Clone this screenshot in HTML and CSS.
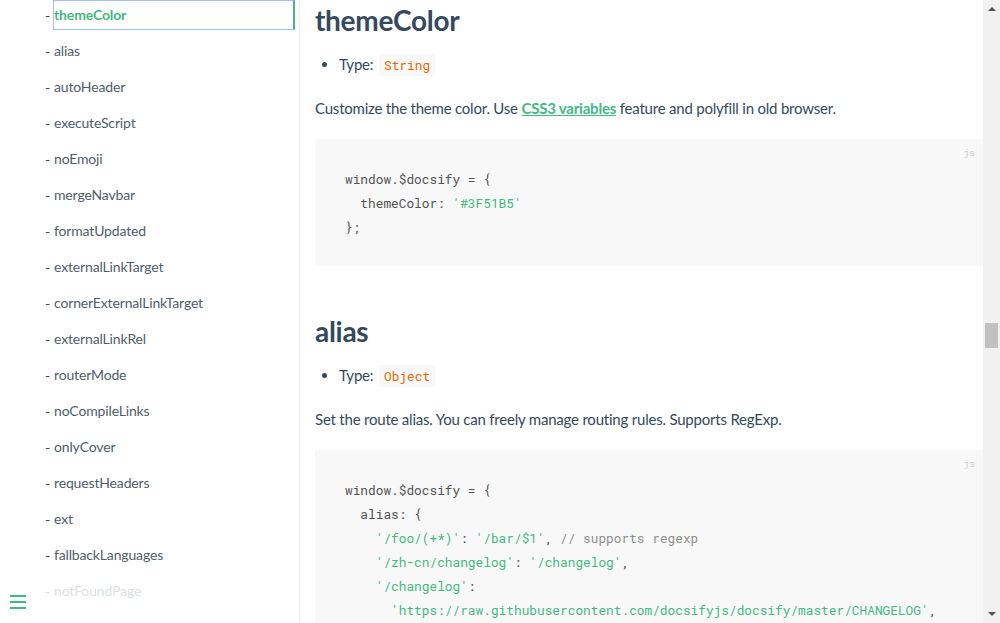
FILE: index.html
```html
<!DOCTYPE html>
<html>
<head>
<meta charset="utf-8">
<link rel="stylesheet" href="styles.css">
</head>
<body>
<div class="app">
  <aside class="sidebar">
    <ul class="nav">
      <li class="item"><span class="dash">-</span><a class="link active">themeColor</a></li>
      <li class="item"><span class="dash">-</span><a class="link">alias</a></li>
      <li class="item"><span class="dash">-</span><a class="link">autoHeader</a></li>
      <li class="item"><span class="dash">-</span><a class="link">executeScript</a></li>
      <li class="item"><span class="dash">-</span><a class="link">noEmoji</a></li>
      <li class="item"><span class="dash">-</span><a class="link">mergeNavbar</a></li>
      <li class="item"><span class="dash">-</span><a class="link">formatUpdated</a></li>
      <li class="item"><span class="dash">-</span><a class="link">externalLinkTarget</a></li>
      <li class="item"><span class="dash">-</span><a class="link">cornerExternalLinkTarget</a></li>
      <li class="item"><span class="dash">-</span><a class="link">externalLinkRel</a></li>
      <li class="item"><span class="dash">-</span><a class="link">routerMode</a></li>
      <li class="item"><span class="dash">-</span><a class="link">noCompileLinks</a></li>
      <li class="item"><span class="dash">-</span><a class="link">onlyCover</a></li>
      <li class="item"><span class="dash">-</span><a class="link">requestHeaders</a></li>
      <li class="item"><span class="dash">-</span><a class="link">ext</a></li>
      <li class="item"><span class="dash">-</span><a class="link">fallbackLanguages</a></li>
      <li class="item"><span class="dash">-</span><a class="link">notFoundPage</a></li>
    </ul>
    <button class="toggle" aria-label="toggle sidebar"><span></span><span></span><span></span></button>
  </aside>
  <main class="content">
    <section class="section">
      <h2 class="title">themeColor</h2>
      <ul class="props"><li>Type: <code class="inline">String</code></li></ul>
      <p class="para">Customize the theme color. Use <a class="plink">CSS3 variables</a> feature and polyfill in old browser.</p>
      <div class="codeblock"><span class="lang">js</span><pre class="code"><span class="ln">window.$docsify = {</span>
<span class="ln">  themeColor: <span class="str">'#3F51B5'</span></span>
<span class="ln">};</span></pre></div>
    </section>
    <section class="section">
      <h2 class="title">alias</h2>
      <ul class="props"><li>Type: <code class="inline">Object</code></li></ul>
      <p class="para">Set the route alias. You can freely manage routing rules. Supports RegExp.</p>
      <div class="codeblock"><span class="lang">js</span><pre class="code"><span class="ln">window.$docsify = {</span>
<span class="ln">  alias: {</span>
<span class="ln">    <span class="str">'/foo/(+*)'</span>: <span class="str">'/bar/$1'</span>, <span class="cmt">// supports regexp</span></span>
<span class="ln">    <span class="str">'/zh-cn/changelog'</span>: <span class="str">'/changelog'</span>,</span>
<span class="ln">    <span class="str">'/changelog'</span>:</span>
<span class="ln">      <span class="str">'https://raw.githubusercontent.com/docsifyjs/docsify/master/CHANGELOG'</span>,</span></pre></div>
    </section>
  </main>
  <div class="scrollbar">
    <span class="arrow up"></span>
    <div class="track"><div class="thumb"></div></div>
    <span class="arrow down"></span>
  </div>
</div>
</body>
</html>
```

FILE: styles.css
```css
html, body {
  margin: 0;
  padding: 0;
  height: 100%;
  overflow: hidden;
  background: #fff;
}
body {
  font-family: "Source Sans Pro", Lato, "Helvetica Neue", Arial, sans-serif;
  color: #34495e;
  -webkit-font-smoothing: antialiased;
}
.app {
  display: flex;
  height: 623px;
}
.sidebar {
  position: relative;
  width: 299px;
  flex: 0 0 299px;
  border-right: 1px solid #eee;
  overflow: hidden;
}
.nav {
  list-style: none;
  margin: 0;
  padding: 0 4px 0 45px;
}
.item {
  display: flex;
  align-items: center;
  height: 30px;
  margin-bottom: 6px;
  font-size: 14px;
  letter-spacing: -0.15px;
  color: #505d6b;
}
.dash {
  width: 8px;
  flex: 0 0 8px;
  color: #364149;
}
.link {
  flex: 1;
  display: block;
  height: 30px;
  line-height: 30px;
  box-sizing: border-box;
  padding-left: 1px;
  color: #505d6b;
}
.link.active {
  color: #42b983;
  font-weight: 700;
  border: 1px solid #9fc1f8;
  border-right: 2px solid #42b983;
  line-height: 28px;
  padding-left: 0;
}
.toggle {
  position: absolute;
  left: 0;
  bottom: 0;
  width: 284px;
  height: 38px;
  padding: 10px;
  border: 0;
  margin: 0;
  background: rgba(255, 255, 255, 0.8);
  display: flex;
  flex-direction: column;
  align-items: flex-start;
  gap: 4px;
  box-sizing: border-box;
}
.toggle span {
  display: block;
  width: 16px;
  height: 2px;
  background: #42b983;
}
.content {
  flex: 1;
  min-width: 0;
  padding-left: 15px;
  overflow: hidden;
}
.section {
  padding-bottom: 45px;
}
.title {
  margin: 0;
  font-size: 28px;
  line-height: 40px;
  font-weight: 700;
  letter-spacing: -0.3px;
  color: #34495e;
}
.props {
  margin: 12px 0 0;
  padding-left: 24px;
  font-size: 15px;
  line-height: 24px;
  letter-spacing: -0.2px;
}
.inline {
  font-family: "Roboto Mono", "Liberation Mono", monospace;
  font-size: 12.8px;
  letter-spacing: 0;
  color: #e96900;
  background: #f8f8f8;
  padding: 3px 5px;
  margin: 0 2px;
  border-radius: 2px;
}
.para {
  margin: 19px 0;
  font-size: 15px;
  line-height: 24px;
  letter-spacing: -0.21px;
}
.plink {
  color: #42b983;
  font-weight: 700;
  text-decoration: underline;
}
.codeblock {
  position: relative;
  background: #f8f8f8;
}
.lang {
  position: absolute;
  top: 7px;
  right: 8px;
  font-family: "Roboto Mono", "Liberation Mono", monospace;
  font-size: 9.6px;
  color: #ccc;
}
.code {
  margin: 0;
  padding: 28px 30px 27px;
  font-family: "Roboto Mono", "Liberation Mono", monospace;
  font-size: 12.8px;
  line-height: 24px;
  color: #525252;
  white-space: pre;
}
.str { color: #42b983; }
.cmt { color: #8e908c; }
.scrollbar {
  width: 17px;
  flex: 0 0 17px;
  background: #f1f1f1;
  display: flex;
  flex-direction: column;
  align-items: center;
}
.arrow {
  display: block;
  width: 0;
  height: 0;
  border-left: 4px solid transparent;
  border-right: 4px solid transparent;
  margin: 7px 0;
}
.arrow.up { border-bottom: 4px solid #505050; }
.arrow.down { border-top: 4px solid #505050; }
.track {
  flex: 1;
  width: 100%;
  padding: 305px 2px 0;
  box-sizing: border-box;
}
.thumb {
  height: 25px;
  background: #c1c1c1;
}
```
